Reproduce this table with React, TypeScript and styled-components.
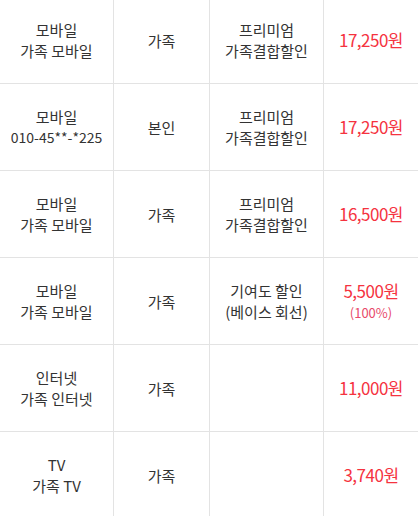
import React from 'react';
import styled, { createGlobalStyle } from 'styled-components';

const GlobalStyle = createGlobalStyle`
    html, body {
        margin: 0;
        padding: 0;
        background: #fff;
    }
    body {
        font-family: "Noto Sans CJK KR", "Noto Sans", sans-serif;
        color: #333;
    }
`;

const Table = styled.div`
    display: grid;
    grid-template-columns: 114px 96px 114px 94px;
    margin-top: -3px;
    width: 418px;
`;

const Cell = styled.div<{ $last?: boolean }>`
    display: flex;
    flex-direction: column;
    align-items: center;
    justify-content: center;
    height: 87px;
    box-sizing: border-box;
    border-bottom: 1px solid #e3e3e3;
    border-right: ${(p) => (p.$last ? 'none' : '1px solid #e3e3e3')};
    text-align: center;
    font-size: 15px;
    line-height: 21px;
    color: #333;
`;

const Line = styled.div<{ $digits?: boolean }>`
    font-size: ${(p) => (p.$digits ? '14px' : '15px')};
    white-space: nowrap;
`;

const Price = styled.div`
    font-size: 17px;
    line-height: 22px;
    color: #f5333f;
    letter-spacing: -0.5px;
`;

const Rate = styled.div`
    margin-top: 2px;
    font-size: 13px;
    line-height: 18px;
    color: #e84a6a;
`;

type Row = {
    service: string[];
    relation: string;
    discount: string[];
    price: string;
    rate?: string;
};

const rows: Row[] = [
    { service: ['모바일', '가족 모바일'], relation: '가족', discount: ['프리미엄', '가족결합할인'], price: '17,250원' },
    { service: ['모바일', '010-45**-*225'], relation: '본인', discount: ['프리미엄', '가족결합할인'], price: '17,250원' },
    { service: ['모바일', '가족 모바일'], relation: '가족', discount: ['프리미엄', '가족결합할인'], price: '16,500원' },
    { service: ['모바일', '가족 모바일'], relation: '가족', discount: ['기여도 할인', '(베이스 회선)'], price: '5,500원', rate: '(100%)' },
    { service: ['인터넷', '가족 인터넷'], relation: '가족', discount: [], price: '11,000원' },
    { service: ['TV', '가족 TV'], relation: '가족', discount: [], price: '3,740원' },
];

const App: React.FC = () => {
    return (
        <>
            <GlobalStyle />
            <Table>
                {rows.map((row, i) => (
                    <React.Fragment key={i}>
                        <Cell>
                            {row.service.map((line) => (
                                <Line key={line} $digits={/^\d/.test(line)}>
                                    {line}
                                </Line>
                            ))}
                        </Cell>
                        <Cell>{row.relation}</Cell>
                        <Cell>
                            {row.discount.map((line) => (
                                <Line key={line}>{line}</Line>
                            ))}
                        </Cell>
                        <Cell $last>
                            <Price>{row.price}</Price>
                            {row.rate && <Rate>{row.rate}</Rate>}
                        </Cell>
                    </React.Fragment>
                ))}
            </Table>
        </>
    );
};

export default App;
